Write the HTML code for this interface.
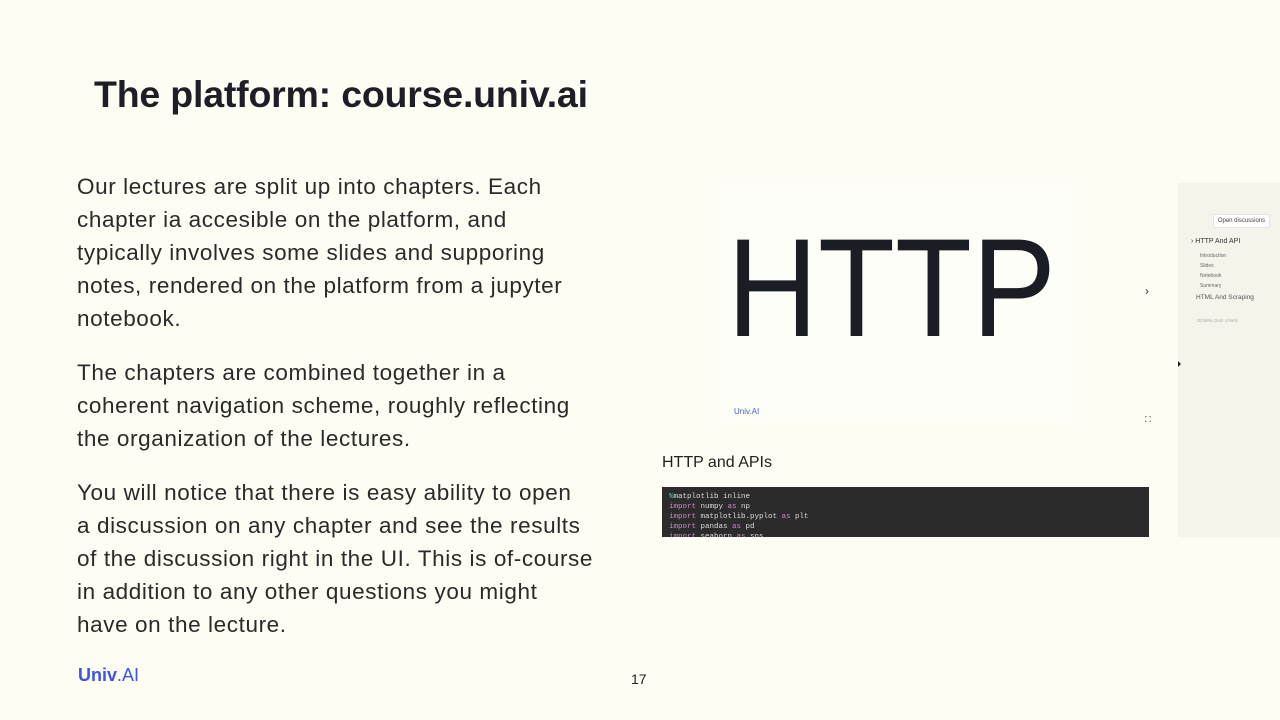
<!DOCTYPE html>
<html><head><meta charset="utf-8"><style>
*{margin:0;padding:0;box-sizing:border-box}
body{width:1280px;height:720px;background:#fdfdf3;position:relative;overflow:hidden;font-family:"Liberation Sans",sans-serif;color:#23232b}
.abs{position:absolute}
h1{position:absolute;left:94px;top:73px;font-size:37.5px;font-weight:600;color:#1d1e26;letter-spacing:-0.2px}
.txt{position:absolute;left:77px;width:560px;font-size:22.5px;line-height:33px;color:#2a2a2a;white-space:nowrap;letter-spacing:0.6px}
.txt p{margin-bottom:21px}
</style></head><body>
<h1>The platform: course.univ.ai</h1>
<div class="txt" style="top:170px">
<p>Our lectures are split up into chapters. Each<br>chapter ia accesible on the platform, and<br>typically involves some slides and supporing<br>notes, rendered on the platform from a jupyter<br>notebook.</p>
<p>The chapters are combined together in a<br>coherent navigation scheme, roughly reflecting<br>the organization of the lectures.</p>
<p>You will notice that there is easy ability to open<br>a discussion on any chapter and see the results<br>of the discussion right in the UI. This is of-course<br>in addition to any other questions you might<br>have on the lecture.</p>
</div>
<div class="abs" style="left:78px;top:665px;font-size:18px;font-weight:bold;color:#3b55e0">Univ<span style="font-weight:normal">.AI</span></div>
<div class="abs" style="left:631px;top:671px;font-size:14px;color:#222">17</div>

<div class="abs" style="left:640px;top:183px;width:538px;height:354px;background:#fdfdf3"></div>
<div class="abs" style="left:718px;top:183px;width:355px;height:240px;background:#fefef8"></div>
<div class="abs" style="left:727px;top:203px;font-size:140px;line-height:170px;color:#1b1d25;transform:scaleX(0.9);transform-origin:0 0">HTTP</div>
<div class="abs" style="left:734px;top:407px;font-size:8px;color:#4a5de0">Univ.AI</div>
<div class="abs" style="left:1145px;top:284px;font-size:12px;color:#333">›</div>
<div class="abs" style="left:1145px;top:415px;font-size:8px;color:#333">⛶</div>
<div class="abs" style="left:662px;top:454px;font-size:16px;color:#222">HTTP and APIs</div>
<div class="abs" style="left:662px;top:487px;width:487px;height:50px;background:#2b2b2b;font-family:'Liberation Mono',monospace;font-size:7.5px;line-height:10px;color:#ddd;padding:5px 7px;overflow:hidden">
<span style="color:#5cc">%</span>matplotlib inline<br><span style="color:#c8c">import</span> numpy <span style="color:#c8c">as</span> np<br><span style="color:#c8c">import</span> matplotlib.pyplot <span style="color:#c8c">as</span> plt<br><span style="color:#c8c">import</span> pandas <span style="color:#c8c">as</span> pd<br><span style="color:#c8c">import</span> seaborn <span style="color:#c8c">as</span> sns</div>
<div class="abs" style="left:1178px;top:183px;width:102px;height:354px;background:#f5f4ea"></div>
<div class="abs" style="left:1213px;top:214px;width:57px;height:14px;background:#fff;border:1px solid #e6e6e0;font-size:6px;line-height:12px;text-align:center;color:#444">Open discussions</div>
<div class="abs" style="left:1191px;top:238px;font-size:7px;color:#333">› HTTP And API</div>
<div class="abs" style="left:1200px;top:251px;font-size:5px;line-height:10px;color:#666">Introduction<br>Slides<br>Notebook<br>Summary</div>
<div class="abs" style="left:1196px;top:294px;font-size:6.5px;color:#555">HTML And Scraping</div>
<div class="abs" style="left:1197px;top:318px;font-size:4.5px;color:#aaa">DOWNLOAD LINKS</div>
<div class="abs" style="left:1178px;top:361px;width:0;height:0;border-left:3px solid #222;border-top:3px solid transparent;border-bottom:3px solid transparent"></div>
</body></html>
